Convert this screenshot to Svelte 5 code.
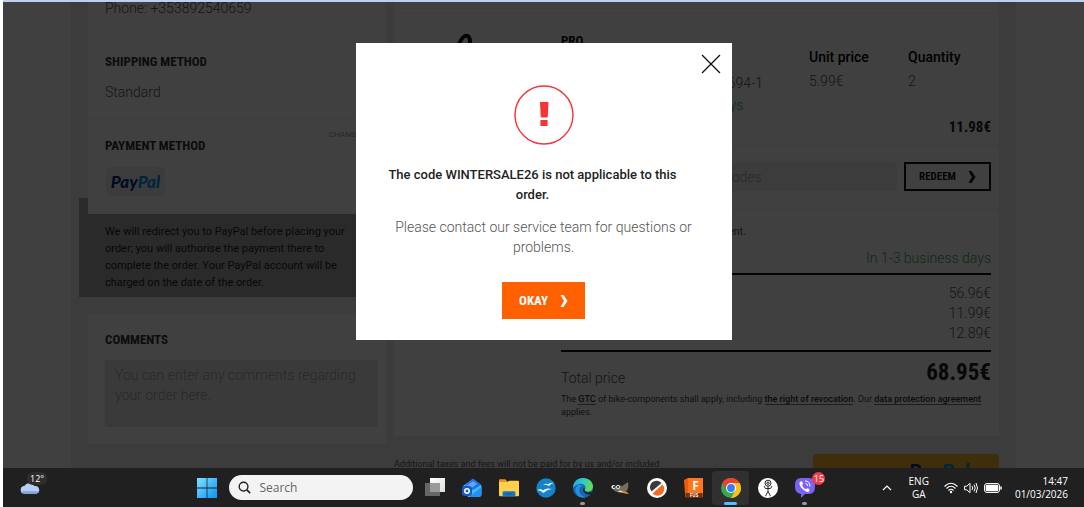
<script>
  const totals = ['56.96€', '11.99€', '12.89€'];
  let open = $state(true);
</script>

{#snippet chevron()}
  <svg class="chevron" viewBox="0 0 8 12" aria-hidden="true"><path d="M.5 0h3L7.500 6l-4 6h-3l3.500-6z" fill="currentColor" /></svg>
{/snippet}

<div class="screen">
  <div class="page">
    <div class="container">
      <div class="left">
        <div class="card">
          <section class="phone"><p>Phone: +353892540659</p></section>
          <section class="shipping">
            <h2>SHIPPING METHOD</h2>
            <p>Standard</p>
          </section>
          <section class="payment">
            <a class="change" href="#change">CHANGE</a>
            <h2>PAYMENT METHOD</h2>
            <span class="badge"><b>Pay</b><i>Pal</i></span>
          </section>
        </div>
        <p class="notice">We will redirect you to PayPal before placing your order; you will authorise the payment there to complete the order. Your PayPal account will be charged on the date of the order.</p>
        <div class="card comments">
          <h2><label for="comments">COMMENTS</label></h2>
          <textarea id="comments" placeholder="You can enter any comments regarding your order here."></textarea>
        </div>
      </div>

      <div class="right">
        <div class="card">
          <div class="previous price">8.99€</div>
          <div class="product">
            <svg class="photo" viewBox="0 0 40 60" aria-hidden="true"><path d="M14 56C15 30 17 8 25 5c8-2 5 12 1 24" fill="none" stroke="#111" stroke-width="4" stroke-linecap="round" /></svg>
            <div class="name">
              <strong>PRO</strong>
              <span class="number">Item number: 103882-9482694-1</span>
              <span class="stock">Available in 1-3 business days</span>
            </div>
            <dl><dt>Unit price</dt><dd>5.99€</dd></dl>
            <dl><dt>Quantity</dt><dd>2</dd></dl>
            <div class="price sum">11.98€</div>
          </div>
          <form class="voucher" onsubmit={(e) => e.preventDefault()}>
            <input aria-label="Voucher codes" placeholder="Enter coupon or voucher codes" />
            <button>REDEEM {@render chevron()}</button>
          </form>
          <div class="summary">
            <p class="hint">Shipping costs apply to any shipment.</p>
            <p class="delivery">In 1-3 business days</p>
            <ul>
              {#each totals as value}<li>{value}</li>{/each}
            </ul>
            <div class="total"><span>Total price</span><strong>68.95€</strong></div>
            <p class="terms">The <a href="#gtc">GTC</a> of bike-components shall apply, including <a href="#revocation">the right of revocation</a>. Our <a href="#privacy">data protection agreement</a> applies.</p>
          </div>
        </div>
        <div class="checkout">
          <p>Additional taxes and fees will not be paid for by us and/or included</p>
          <button aria-label="PayPal"><b>Pay</b><i>Pal</i></button>
        </div>
      </div>
    </div>

    {#if open}
      <div class="overlay">
        <div class="modal" role="dialog" aria-modal="true" aria-labelledby="dialog-title">
          <button class="close" aria-label="Close" onclick={() => (open = false)}>
            <svg viewBox="0 0 18 18"><path d="M0 0l18 18M18 0L0 18" stroke="#111" stroke-width="1.3" /></svg>
          </button>
          <svg class="alert" viewBox="0 0 60 60" aria-hidden="true">
            <circle cx="30" cy="30" r="29" fill="none" stroke="#f23535" stroke-width="1.4" />
            <path d="M26.500 17h7.500q.5 0 .5.600l-.7 14q-.1.900-.8.900h-5.500q-.7 0-.8-.9l-.7-14q0-.6.500-.6zM27 35h6q.6 0 .6.600v4.800q0 .6-.6.600h-6q-.6 0-.6-.6v-4.800q0-.6.600-.6z" fill="#f23535" />
          </svg>
          <h1 id="dialog-title">The code WINTERSALE26 is not applicable to this order.</h1>
          <p>Please contact our service team for questions or problems.</p>
          <button class="okay" onclick={() => (open = false)}>OKAY {@render chevron()}</button>
        </div>
      </div>
    {/if}
  </div>

  <footer class="taskbar">
    <div class="weather">
      <svg viewBox="0 0 22 14" aria-hidden="true"><path d="M5 13a4 4 0 0 1-.5-8A6 6 0 0 1 15 5a4 4 0 0 1 2 8z" fill="#b9cef2" /><path d="M1.500 10.500q1 2.500 4 2.500h11q3 0 3.500-2.500z" fill="#7fa3e6" /></svg>
      <span>12°</span>
    </div>
    <nav class="apps" aria-label="Taskbar">
      <button aria-label="Start">
        <svg viewBox="0 0 20 20"><defs><linearGradient id="win" gradientUnits="userSpaceOnUse" x1="0" y1="0" x2="20" y2="20"><stop offset="0" stop-color="#7fe0ff" /><stop offset="1" stop-color="#0a93f5" /></linearGradient></defs><path d="M0 0h9.600v9.600H0zM10.400 0H20v9.600h-9.600zM0 10.400h9.600V20H0zM10.400 10.400H20V20h-9.600z" fill="url(#win)" /></svg>
      </button>
      <label class="search">
        <svg viewBox="0 0 14 14" aria-hidden="true"><circle cx="6" cy="6" r="4.700" fill="none" stroke="#222" stroke-width="1.500" /><path d="M9.500 9.500l3.500 3.500" stroke="#222" stroke-width="1.800" /></svg>
        <input aria-label="Search" placeholder="Search" />
      </label>
      <button aria-label="Task view">
        <svg viewBox="0 0 20 20"><defs><linearGradient id="tv" x1="0" y1="0" x2="1" y2="1"><stop offset="0" stop-color="#fff" /><stop offset="1" stop-color="#ddd" /></linearGradient></defs><path d="M5 0h15v14H5z" fill="url(#tv)" /><path d="M0 5h15v13H0z" fill="#666" /><path d="M5 5h10v9H5z" fill="#999" /></svg>
      </button>
      <button aria-label="Camera home">
        <svg viewBox="0 0 20 20"><path d="M1 8L10 1.500q1-.8 2 0L18.500 6.500q1 .8 1 2V16q0 3-3 3H6z" fill="#36c3fa" /><path d="M3 7l7-5.500q1-.8 2 0l7 5.500-8 5z" fill="#2570e8" /><path d="M5 7.500l6-4.500 4 3-6 4.500z" fill="#5ea6ff" /><path d="M7 19L19.500 9v7q0 3-3 3z" fill="#2a8cf5" /><rect y="8" width="10" height="10" rx="3" fill="#1859c9" /><circle cx="5" cy="13" r="2.200" fill="none" stroke="#fff" stroke-width="1.500" /></svg>
      </button>
      <button aria-label="Files">
        <svg viewBox="0 0 22 20"><path d="M0 1.500Q0 .5 1 .5h6l2.500 3H0z" fill="#e59a13" /><path d="M0 3.500h9L11 2h10q1 0 1 1v15q0 1-1 1H1q-1 0-1-1z" fill="#ffd04e" /><path d="M4 19v-4q0-1.500 1.500-1.500h11Q18 13.500 18 15v4z" fill="#1477c9" /><path d="M7 16h8v1H7z" fill="#0c5795" /></svg>
      </button>
      <button aria-label="OpenOffice">
        <svg viewBox="0 0 20 20"><circle cx="10" cy="10" r="9.700" fill="#1583cb" /><path d="M7 6.500q3-1.500 5 0 2-2.500 6-1.500-3 .2-5 3-2.500-2-6-1.500zM1 12q4-1.500 6 .5 3-3 9-1.500-5 .5-8.500 4-2-2.500-6.500-3z" fill="#fff" /></svg>
      </button>
      <button aria-label="Edge" class="running">
        <svg viewBox="0 0 20 20"><defs><linearGradient id="edge" x1="0" y1="0" x2="1" y2=".3"><stop offset="0" stop-color="#259fe0" /><stop offset=".5" stop-color="#30c6cf" /><stop offset="1" stop-color="#63dd50" /></linearGradient></defs><circle cx="10" cy="10" r="10" fill="#1268b6" /><path d="M0 10C0 4 4 0 10 0c6 0 10 4 10 8.500 0 3-2.500 5-5.500 5-2 0-3-1-2.500-2C14 8 10 5 6 6c-3 1-5 2-6 4z" fill="url(#edge)" /><path d="M9 8c-5 3-3 10 4 11.500-9 1-13-7-9-11.500 2-2 5-1.500 5 0z" fill="#2292df" /><path d="M11.500 10.500c-.5 3.500 3.500 4.500 7 3.500l1.500 1-1 1c-4 1.500-9-.5-9-4 0-1 1-2 1.500-1.500z" fill="#202020" /></svg>
      </button>
      <button aria-label="GIMP">
        <svg viewBox="0 0 20 20"><path d="M1 8l4 1 3-2 4 1 6-4q1 5-1 8.500-3 3.500-8 2Q3 13.500 1 8z" fill="#746d60" /><circle cx="3.500" cy="9" r="2" fill="#eee" /><circle cx="8" cy="9" r="2" fill="#eee" /><circle cx="4" cy="9" r="1" fill="#111" /><circle cx="8" cy="9" r="1" fill="#111" /><path d="M9 12.500l4 .5v1.500l-5-.8z" fill="#ddd" /><path d="M12 13l5 1 2 2-4-.5-3-1z" fill="#e88c28" /></svg>
      </button>
      <button aria-label="Slicer">
        <svg viewBox="0 0 20 20"><circle cx="10" cy="10" r="10" fill="#fff" /><path d="M4.500 13.500A6.500 6.500 0 0 1 14.500 5z" fill="#3a3a3a" /><path d="M5.500 15.500L15.500 6.500a6.500 6.500 0 0 1-10 9z" fill="#f36b21" /></svg>
      </button>
      <button aria-label="Fusion">
        <svg viewBox="0 0 20 20"><path d="M1 2L4 0h15v19H1z" fill="#b64c0a" /><path d="M4 0h15v15H4z" fill="#ff761c" /><path d="M0 2l4-2v15H1z" fill="#ef5c08" /><path d="M2 15h16v5H2z" fill="#71300c" /><text x="11.500" y="12" text-anchor="middle" font-size="12" font-weight="700" fill="#fff">F</text><text x="10" y="19.200" text-anchor="middle" font-size="4.500" font-weight="700" fill="#fff">FUS</text></svg>
      </button>
      <button aria-label="Chrome" class="running active">
        <svg viewBox="0 0 20 20"><circle cx="10" cy="10" r="10" fill="#34a853" /><path d="M1.340 5A10 10 0 0 1 18.660 5H10z" fill="#ea4335" /><path d="M1.340 5L5.670 12.500 10 10V5z" fill="#ea4335" /><path d="M18.660 5A10 10 0 0 1 10 20l4.330-7.500L10 5z" fill="#fbc116" /><circle cx="10" cy="10" r="5" fill="#fff" /><circle cx="10" cy="10" r="3.900" fill="#317ff0" /></svg>
      </button>
      <button aria-label="Stick figure">
        <svg viewBox="0 0 20 20"><circle cx="10" cy="10" r="10" fill="#fff" /><g fill="none" stroke="#111" stroke-width=".9"><circle cx="10" cy="5.200" r="3" /><circle cx="10" cy="5.200" r="1.200" /><path d="M10 8.200v5l-2.500 5M10 13.200l2.500 5M6 8l1.500 2.500h5L14 8" /></g></svg>
      </button>
      <button aria-label="Viber" class="running">
        <svg viewBox="0 0 20 20"><path d="M6 0h8q6 0 6 7v2q0 7-6 7h-4l-4 4v-4q-6-1-6-7V7q0-7 6-7z" fill="#7b62f3" /><path d="M5.500 3.500q1-.7 2 .8 1 1.500 0 2.200-1 1 1 3.200 2 2 3 1 .8-1 2.200.1 1.500 1 .8 2-1 1.700-2.800 1Q6 11 4.500 6.500q-.5-2 1-3z" fill="#fff" /><path d="M10 3q5 0 5 5.500M10.500 5.500q2.300.2 2.300 2.500" fill="none" stroke="#fff" /></svg>
        <span class="count">15</span>
      </button>
    </nav>
    <div class="tray">
      <svg class="up" viewBox="0 0 10 6" aria-hidden="true"><path d="M1 5l4-4 4 4" fill="none" stroke="#fff" stroke-width="1.200" /></svg>
      <span class="lang">ENG<br />GA</span>
      <svg class="wifi" viewBox="0 0 14 12" aria-hidden="true"><g fill="none" stroke="#fff" stroke-width="1.100"><path d="M.5 4.500q6.500-6.500 13 0M2.500 6.500q4.500-4.500 9 0M4.500 8.500q2.500-2.500 5 0" /></g><circle cx="7" cy="10" r="1.200" fill="#fff" /></svg>
      <svg class="sound" viewBox="0 0 14 12" aria-hidden="true"><path d="M.6 4.200h2.200L6 1.300v9.400L2.800 7.800H.6zM8 4q1.500 2 0 4M10 2.500q2.500 3.500 0 7M12 1q3 5 0 10" fill="none" stroke="#fff" /></svg>
      <svg class="battery" viewBox="0 0 18 10" aria-hidden="true"><rect x=".5" y=".5" width="15" height="9" rx="2.500" fill="none" stroke="#fff" /><rect x="1.700" y="1.700" width="12.600" height="6.600" rx="1.300" fill="#fff" /><path d="M17 3.500v3" stroke="#fff" stroke-width="1.500" /></svg>
      <span class="clock">14:47<br />01/03/2026</span>
    </div>
  </footer>
</div>

<style>
  :global(body) { margin: 0; background: #fff; }
  .screen {
    --narrow: "Liberation Sans Narrow", "Roboto Condensed", "DejaVu Sans Condensed", sans-serif;
    display: flex; flex-direction: column; height: 100vh; box-sizing: border-box;
    padding-left: 3px; font: 300 14px/20px Roboto, sans-serif; color: #555;
  }
  .screen * { box-sizing: border-box; }
  p, h1, h2, dl, dd, ul { margin: 0; padding: 0; }
  button { font: inherit; border: 0; padding: 0; cursor: pointer; }
  .page {
    position: relative; flex: 1; min-height: 0; overflow: hidden;
    padding: 0 68px; background: #fff; border-top: 2px solid #bdd0f0;
  }
  .container {
    display: grid; grid-template-columns: 33fr 67fr; gap: 8px;
    margin-top: -15px; padding: 0 17px 40px; background: #f0f0f0;
  }
  .card { position: relative; background: #fff; }
  h2 { font: 700 13px/20px var(--narrow); color: #333; }
  section { padding: 0 17px; }
  .phone { height: 49px; padding-top: 11px; border-bottom: 1px solid #f4f4f4; }
  .shipping { height: 83px; padding-top: 16px; border-bottom: 1px solid #f4f4f4; }
  .shipping p { margin-top: 10px; }
  .payment { height: 95px; padding-top: 11px; }
  .change { display: block; padding-right: 8px; font: 400 8px/10px Roboto, sans-serif; text-align: right; text-decoration: none; color: #999; }
  .payment h2 { margin-top: -4px; }
  .badge { display: flex; align-items: center; justify-content: center; width: 59px; height: 29px; margin: 11px 0 0 1px; border-radius: 4px; background: #f0f0f0; font: italic 900 17px/26px Lato, sans-serif; }
  .badge b, .checkout b { color: #002c8a; font-weight: 900; }
  .badge i, .checkout i { color: #009be1; font-weight: 900; }
  .notice { margin: -16px 0 0 -9px; padding: 25px 26px 6px; font: 400 11px/17px Roboto, sans-serif; color: #222; background: #a8a8a8; }
  .comments { margin-top: 17px; padding: 16px 8px 17px 17px; }
  textarea { display: block; width: 100%; height: 67px; margin-top: 10px; padding: 5px 10px; border: 0; resize: none; background: #e8e8e8; font: inherit; }
  ::placeholder { color: #a0a0a0; opacity: 1; }

  .price { font: 700 15px/20px var(--narrow); color: #222; text-align: right; }
  .previous { height: 27px; padding-right: 8px; border-bottom: 1px solid #f4f4f4; }
  .product {
    display: grid; grid-template-columns: 167px 1fr 99px 83px; height: 131px;
    padding: 17px 8px 6px 0; border-bottom: 1px solid #f4f4f4;
  }
  .photo { width: 40px; height: 60px; margin-left: 46px; }
  .name { display: flex; flex-direction: column; white-space: nowrap; }
  .name strong { font: 700 13px/20px var(--narrow); color: #111; }
  .number { margin-top: 22px; }
  .stock { margin-top: 2px; color: #2fa858; }
  dl { padding-top: 16px; }
  dt { font-weight: 500; color: #000; }
  dd { margin-top: 4px; }
  .sum { grid-column: 1 / -1; }
  .voucher { display: flex; gap: 7px; height: 64px; padding: 17px 8px 17px 167px; border-bottom: 1px solid #f4f4f4; }
  .voucher input { flex: 1; min-width: 0; padding: 0 10px; border: 0; border-radius: 3px; background: #f0f0f0; font: inherit; }
  .voucher button, .okay { display: flex; align-items: center; justify-content: center; gap: 12px; }
  .voucher button { width: 87px; border: 2px solid #111; background: #fff; color: #111; font: 700 11px/20px var(--narrow); }
  .chevron { flex: none; width: 8px; height: 12px; }
  .summary { padding: 14px 8px 17px 167px; }
  .hint { font: 400 11px/18px Roboto, sans-serif; }
  .delivery { margin-top: 7px; text-align: right; color: #2fa858; }
  ul { list-style: none; margin-top: 5px; padding: 8px 0 7px; border: solid #111; border-width: 2px 0; text-align: right; }
  .total { display: flex; align-items: center; justify-content: space-between; height: 41px; }
  .total span { padding-top: 10px; }
  .total strong { font: 700 23px/30px var(--narrow); color: #222; }
  .terms { font: 400 9px/13px Roboto, sans-serif; color: #444; }
  .terms a { font-weight: 500; color: #333; text-decoration: none; border-bottom: 1px solid #777; }
  .checkout { display: flex; justify-content: space-between; margin-top: 18px; }
  .checkout p { padding-top: 4px; font: 400 9px/13px Roboto, sans-serif; }
  .checkout button { width: 186px; height: 42px; padding: 0 0 8px 66px; border-radius: 3px; background: #fcb62e; font: italic 900 21px/28px Lato, sans-serif; }

  .overlay { position: absolute; inset: 0; display: flex; align-items: flex-start; justify-content: center; padding-top: 41px; background: rgb(0 0 0 / 75%); }
  .modal { position: relative; display: flex; flex-direction: column; align-items: center; width: 376px; padding: 42px 30px 21px; background: #fff; text-align: center; }
  .close { position: absolute; top: 12px; right: 12px; width: 18px; height: 18px; background: none; }
  .close svg { display: block; overflow: visible; }
  .alert { width: 60px; height: 60px; }
  h1 { margin-top: 20px; padding-right: 22px; font: 500 13px/20px Roboto, sans-serif; color: #222; }
  .modal p { margin-top: 12px; }
  .okay { width: 83px; height: 37px; margin-top: 25px; background: #ff6000; color: #fff; font: 700 13px/20px var(--narrow); }

  .taskbar { display: grid; grid-template-columns: 185fr auto 260fr; align-items: center; height: 39px; background: #202020; color: #fff; font: 400 10px/13px "Open Sans", sans-serif; }
  .weather { position: relative; padding-left: 17px; }
  .weather svg { display: block; width: 21px; height: 14px; }
  .weather span { position: absolute; left: 24px; top: -9px; padding: 0 3px; border-radius: 6px; background: #2d2d2d; font-size: 9px; }
  .apps { display: flex; align-items: center; }
  .apps button { position: relative; display: grid; place-items: center; width: 37px; height: 34px; border-radius: 4px; background: none; }
  .apps button svg { width: 20px; height: 20px; font-family: "Open Sans", sans-serif; }
  .search { display: flex; align-items: center; gap: 8px; width: 184px; height: 25px; margin: 0 3px 0 4px; padding: 0 9px; border-radius: 13px; background: #f3f3f3; }
  .search svg { width: 13px; height: 13px; }
  .search input { flex: 1; min-width: 0; padding: 0; border: 0; background: none; font: 12px/16px "Open Sans", sans-serif; }
  .search ::placeholder { color: #666; }
  .running::after { content: ""; position: absolute; bottom: 0; width: 5px; height: 3px; border-radius: 2px; background: #999; }
  .apps .active { background: #303030; }
  .active::after { width: 13px; background: #4cc2ff; }
  .count { position: absolute; right: -2px; top: 1px; width: 13px; height: 13px; border-radius: 7px; background: #f33b44; color: #fff; font: 400 9px/13px "Open Sans", sans-serif; }
  .tray { display: flex; align-items: center; justify-content: flex-end; padding-right: 16px; text-align: center; }
  .up { width: 10px; height: 6px; margin-right: 17px; }
  .wifi { width: 14px; height: 12px; margin: 0 6px 0 15px; }
  .sound { width: 14px; height: 12px; margin-right: 6px; }
  .battery { width: 18px; height: 10px; margin-right: 13px; }
  .clock { text-align: right; }
</style>
